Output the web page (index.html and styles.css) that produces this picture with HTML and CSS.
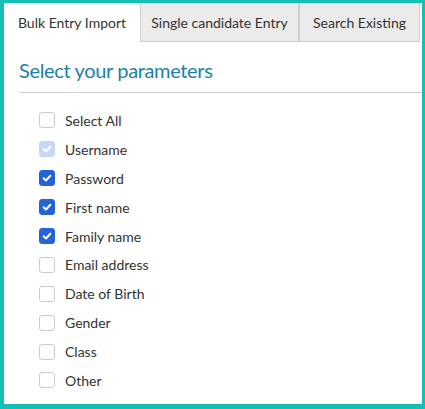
FILE: index.html
```html
<!DOCTYPE html>
<html lang="en">
<head>
<meta charset="utf-8">
<title>Bulk Entry Import</title>
<link rel="stylesheet" href="styles.css">
</head>
<body>
<div class="frame">
  <div class="tabs">
    <div class="tab tab-active tab-1">Bulk Entry Import</div>
    <div class="tab tab-2">Single candidate Entry</div>
    <div class="tab tab-3">Search Existing</div>
  </div>
  <div class="panel">
    <h2 class="title">Select your parameters</h2>
    <div class="rule"></div>
    <ul class="options">
      <li class="option"><span class="box"></span><span class="label">Select All</span></li>
      <li class="option"><span class="box box-disabled"><svg viewBox="0 0 16 16"><path d="M4.2 8.3l2.6 2.5 5-5.4" /></svg></span><span class="label">Username</span></li>
      <li class="option"><span class="box box-checked"><svg viewBox="0 0 16 16"><path d="M4.2 8.3l2.6 2.5 5-5.4" /></svg></span><span class="label">Password</span></li>
      <li class="option"><span class="box box-checked"><svg viewBox="0 0 16 16"><path d="M4.2 8.3l2.6 2.5 5-5.4" /></svg></span><span class="label">First name</span></li>
      <li class="option"><span class="box box-checked"><svg viewBox="0 0 16 16"><path d="M4.2 8.3l2.6 2.5 5-5.4" /></svg></span><span class="label">Family name</span></li>
      <li class="option"><span class="box"></span><span class="label">Email address</span></li>
      <li class="option"><span class="box"></span><span class="label">Date of Birth</span></li>
      <li class="option"><span class="box"></span><span class="label">Gender</span></li>
      <li class="option"><span class="box"></span><span class="label">Class</span></li>
      <li class="option"><span class="box"></span><span class="label">Other</span></li>
    </ul>
  </div>
</div>
</body>
</html>
```
FILE: styles.css
```css
* { box-sizing: border-box; }
html, body { margin: 0; padding: 0; background: #ffffff; }
body {
  font-family: "Source Sans Pro", Lato, "Noto Sans", sans-serif;
  color: #333333;
}
.frame {
  width: 425px;
  height: 409px;
  border-style: solid;
  border-color: #12c1b4;
  border-width: 3px 3px 5px 4px;
  background: #ffffff;
  overflow: hidden;
}
.tabs {
  display: flex;
  height: 39px;
  width: 416px;
}
.tab {
  display: flex;
  align-items: center;
  justify-content: center;
  font-size: 14px;
  color: #333333;
  background: #ebebeb;
  border: 1px solid #cfcfcf;
  border-top: none;
  white-space: nowrap;
}
.tab-active {
  background: #ffffff;
  border: none;
  border-bottom: 1px solid transparent;
}
.tab-1 { width: 136px; }
.tab-2 { width: 159px; }
.tab-3 { width: 121px; }
.panel {
  padding-left: 15px;
}
.title {
  margin: 0;
  padding-top: 15px;
  font-size: 20px;
  font-weight: 400;
  line-height: 26px;
  letter-spacing: -0.35px;
  color: #1d80a8;
}
.rule {
  margin-top: 9px;
  height: 1px;
  background: #cfcfcf;
}
.options {
  list-style: none;
  margin: 0;
  padding: 13px 0 0 20px;
}
.option {
  display: flex;
  align-items: center;
  height: 28.9px;
  font-size: 14px;
}
.box {
  width: 16px;
  height: 16px;
  border: 1px solid #cccccc;
  border-radius: 3px;
  background: #ffffff;
  margin-right: 10px;
  display: flex;
  align-items: center;
  justify-content: center;
}
.box svg {
  width: 16px;
  height: 16px;
  fill: none;
  stroke: #ffffff;
  stroke-width: 2.3;
  stroke-linecap: round;
  stroke-linejoin: round;
}
.box-checked {
  background: #2464d8;
  border-color: #2464d8;
}
.box-disabled {
  background: #c6d8f5;
  border-color: #c6d8f5;
}
.label {
  color: #333333;
}
```
